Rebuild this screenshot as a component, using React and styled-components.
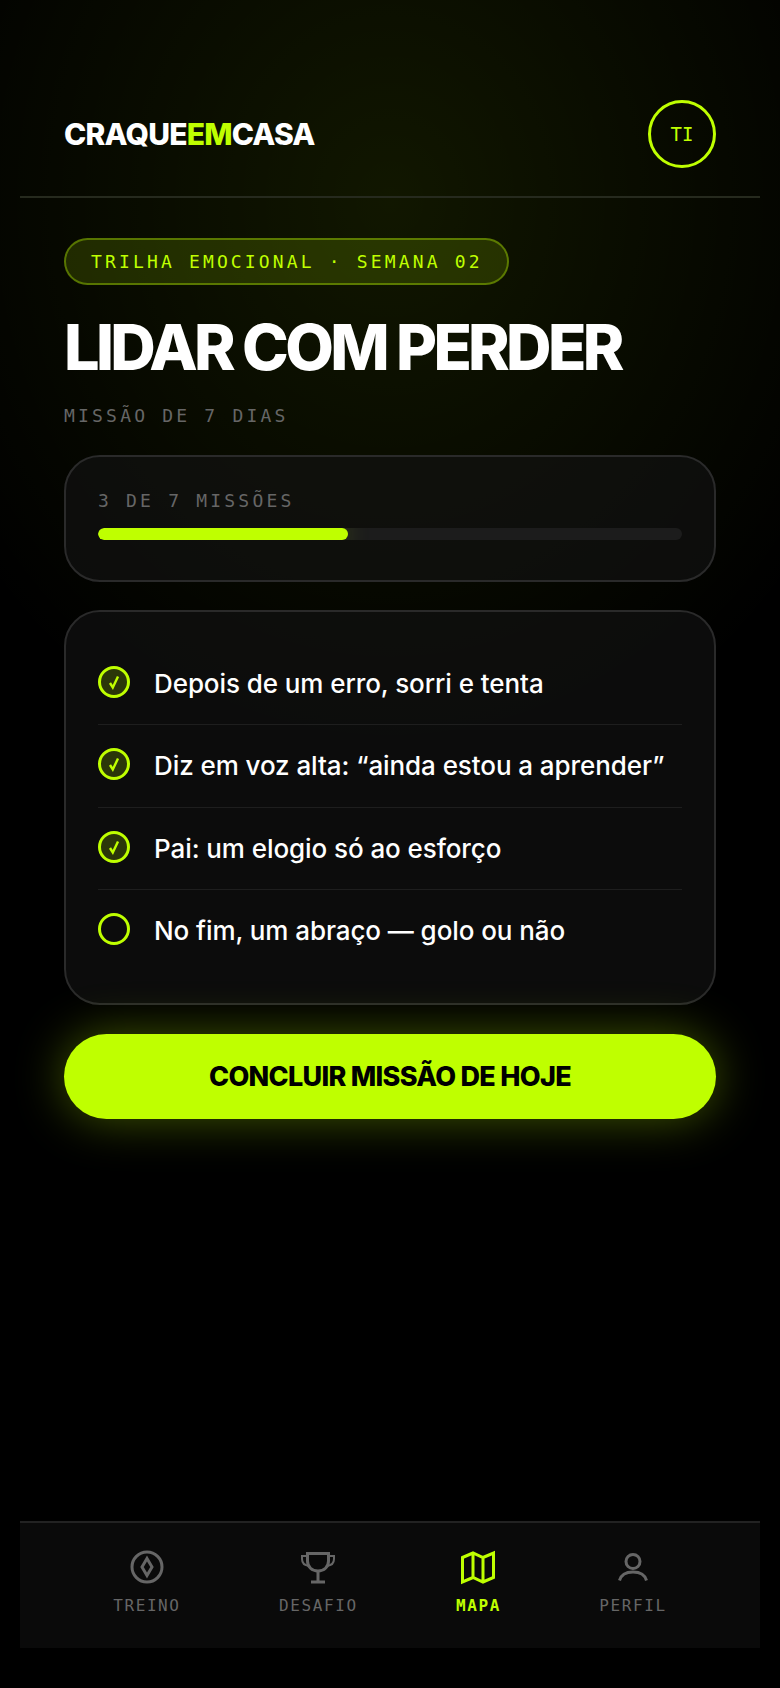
import React from 'react'
import styled, { createGlobalStyle } from 'styled-components'

const lime = '#bfff00'
const mono = '"DejaVu Sans Mono", "Liberation Mono", monospace'
const display = 'Inter, "Noto Sans", sans-serif'

const Global = createGlobalStyle`
  html, body { margin: 0; padding: 0; background: #000; }
  * { box-sizing: border-box; }
`

const Page = styled.div`
  width: 780px;
  height: 1688px;
  padding: 0 20px;
  display: flex;
  flex-direction: column;
  color: #fff;
  font-family: ${display};
  background: radial-gradient(ellipse 520px 600px at 50% 200px, rgba(191, 255, 0, 0.09), rgba(191, 255, 0, 0) 100%), #000;
`

const Header = styled.header`
  height: 198px;
  padding: 100px 44px 30px;
  border-bottom: 2px solid #262a1e;
  display: flex;
  justify-content: space-between;
  align-items: flex-start;
`

const Logo = styled.div`
  margin-top: 15px;
  font-size: 30px;
  line-height: 38px;
  font-weight: 800;
  letter-spacing: -0.8px;
  span { color: ${lime}; }
`

const Avatar = styled.div`
  width: 68px;
  height: 68px;
  border: 3px solid ${lime};
  border-radius: 50%;
  color: ${lime};
  font-family: ${mono};
  font-size: 19px;
  display: flex;
  align-items: center;
  justify-content: center;
`

const Main = styled.main`
  flex: 1;
  padding: 40px 44px 0;
  display: flex;
  flex-direction: column;
`

const Pill = styled.div`
  align-self: flex-start;
  height: 47px;
  padding: 0 24px 0 25px;
  border: 2px solid rgba(191, 255, 0, 0.35);
  border-radius: 24px;
  background: rgba(191, 255, 0, 0.14);
  color: ${lime};
  font-family: ${mono};
  font-size: 18px;
  letter-spacing: 3.15px;
  display: flex;
  align-items: center;
  white-space: nowrap;
`

const Title = styled.h1`
  margin: 24px 0 0;
  font-size: 63px;
  line-height: 76px;
  font-weight: 800;
  letter-spacing: -3.7px;
  white-space: nowrap;
`

const Sub = styled.div`
  margin-top: 19px;
  font-family: ${mono};
  font-size: 18px;
  line-height: 24px;
  letter-spacing: 3.2px;
  color: #666;
`

const Card = styled.section`
  background: rgba(20, 20, 20, 0.62);
  border: 2px solid #2a2a2a;
  border-radius: 36px;
`

const ProgressCard = styled(Card)`
  margin-top: 27px;
  height: 127px;
  padding: 32px 32px 0;
`

const ProgressLabel = styled.div`
  font-family: ${mono};
  font-size: 18px;
  line-height: 24px;
  letter-spacing: 3.2px;
  color: #666;
`

const Track = styled.div`
  margin-top: 15px;
  height: 12px;
  border-radius: 6px;
  background: #1c1c1c;
  overflow: hidden;
`

const Fill = styled.div`
  height: 100%;
  border-radius: 6px;
  background: ${lime};
  box-shadow: 0 0 24px rgba(191, 255, 0, 0.3);
`

const ListCard = styled(Card)`
  margin-top: 28px;
  padding: 29px 32px 31.5px;
`

const Row = styled.div`
  height: ${({ $first }) => ($first ? '83px' : '82.5px')};
  padding-top: ${({ $first }) => ($first ? '2px' : '1px')};
  display: flex;
  align-items: center;
  gap: 24px;
  border-top: ${({ $first }) => ($first ? 'none' : '1px solid #1e1e1e')};
`

const Check = styled.div`
  width: 32px;
  height: 32px;
  flex: none;
  margin-top: -4px;
  border: 3px solid ${lime};
  border-radius: 50%;
  background: ${({ $done }) => ($done ? 'rgba(191, 255, 0, 0.18)' : 'transparent')};
  display: flex;
  align-items: center;
  justify-content: center;
`

const RowText = styled.div`
  font-size: 26px;
  line-height: 34px;
  font-weight: 500;
  letter-spacing: -0.08px;
  white-space: nowrap;
`

const Cta = styled.button`
  margin-top: 29px;
  height: 85px;
  border: 0;
  border-radius: 43px;
  background: ${lime};
  color: #000;
  font-family: ${display};
  font-size: 27px;
  font-weight: 800;
  letter-spacing: -0.7px;
  box-shadow: 0 0 48px rgba(191, 255, 0, 0.34);
`

const Nav = styled.nav`
  height: 127px;
  margin-bottom: 40px;
  padding: 0 44px;
  background: #0a0a0a;
  border-top: 2px solid #222;
  display: flex;
  justify-content: space-around;
`

const NavItem = styled.div`
  padding-top: 26px;
  display: flex;
  flex-direction: column;
  align-items: center;
  gap: 10px;
  color: ${({ $active }) => ($active ? lime : '#666')};
  font-family: ${mono};
  font-size: 16px;
  font-weight: ${({ $active }) => ($active ? 700 : 400)};
  line-height: 22px;
  letter-spacing: 1.6px;
`

const Icon = ({ children, weight = 3 }) => (
  <svg width="36" height="36" viewBox="0 0 36 36" fill="none" stroke="currentColor" strokeWidth={weight}>
    {children}
  </svg>
)

const missions = [
  { text: 'Depois de um erro, sorri e tenta', done: true },
  { text: 'Diz em voz alta: “ainda estou a aprender”', done: true },
  { text: 'Pai: um elogio só ao esforço', done: true },
  { text: 'No fim, um abraço — golo ou não', done: false },
]

const tabs = [
  {
    label: 'TREINO',
    icon: (
      <>
        <circle cx="18" cy="18" r="15" />
        <path d="M18 9.500l5 8.500-5 8.500-5-8.500z" />
      </>
    ),
  },
  {
    label: 'DESAFIO',
    icon: (
      <>
        <path d="M7.500 4.500H28.500V12C28.500 18 24 22 18 22C12 22 7.500 18 7.500 12Z" />
        <path strokeWidth="2" d="M7.500 7H2V10C2 14 5 16.500 9 17M28.500 7H34V10C34 14 31 16.500 27 17" />
        <path d="M18 22V32M11 33H25" />
      </>
    ),
  },
  {
    label: 'MAPA',
    active: true,
    icon: <path d="M2.500 8.500L13 4L23 8.500L33.500 4V28.500L23 33L13 28.500L2.500 33ZM13 4V28.500M23 8.500V33" />,
  },
  {
    label: 'PERFIL',
    icon: (
      <>
        <circle cx="18" cy="12.500" r="7" />
        <path d="M4.500 31.500C6 26 11 23 18 23S30 26 31.500 31.500" />
      </>
    ),
  },
]

export default function App() {
  return (
    <Page>
      <Global />
      <Header>
        <Logo>CRAQUE<span>EM</span>CASA</Logo>
        <Avatar>TI</Avatar>
      </Header>
      <Main>
        <Pill>TRILHA EMOCIONAL · SEMANA 02</Pill>
        <Title>LIDAR COM PERDER</Title>
        <Sub>MISSÃO DE 7 DIAS</Sub>
        <ProgressCard>
          <ProgressLabel>3 DE 7 MISSÕES</ProgressLabel>
          <Track>
            <Fill style={{ width: `${(3 / 7) * 100}%` }} />
          </Track>
        </ProgressCard>
        <ListCard>
          {missions.map((m, i) => (
            <Row key={m.text} $first={i === 0}>
              <Check $done={m.done}>
                {m.done && (
                  <svg width="16" height="16" viewBox="0 0 16 16" fill="none" stroke={lime} strokeWidth="2.400">
                    <path d="M4 9L6.800 13.500L12 2.500" />
                  </svg>
                )}
              </Check>
              <RowText>{m.text}</RowText>
            </Row>
          ))}
        </ListCard>
        <Cta>CONCLUIR MISSÃO DE HOJE</Cta>
      </Main>
      <Nav>
        {tabs.map((t) => (
          <NavItem key={t.label} $active={t.active}>
            <Icon>{t.icon}</Icon>
            {t.label}
          </NavItem>
        ))}
      </Nav>
    </Page>
  )
}
